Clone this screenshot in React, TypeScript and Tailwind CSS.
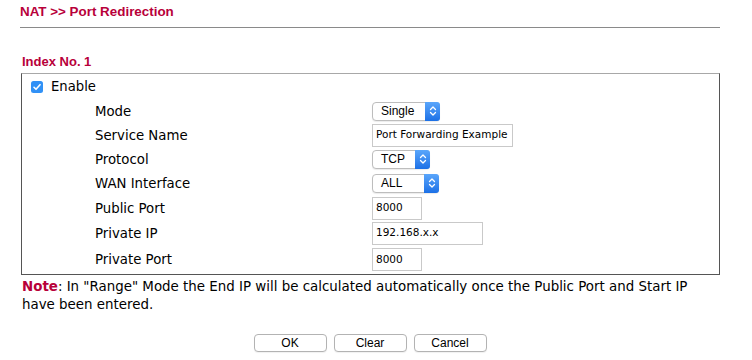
import React from "react";

const RED = "text-[#b8003a]";

function Select({ value, width }: { value: string; width: number }) {
  return (
    <div
      className="flex h-[19px] items-stretch rounded-[4px] border border-[#bdbdbd] bg-white shadow-[0_1px_1px_rgba(0,0,0,0.08)]"
      style={{ width }}
    >
      <div className="flex flex-1 items-center pl-[8px] text-[12px] text-black [font-family:'Liberation_Sans',Arial,sans-serif]">
        {value}
      </div>
      <div className="flex w-[15px] items-center justify-center rounded-r-[3px] bg-gradient-to-b from-[#5aa6fb] to-[#1b70e6] -my-px -mr-px">
        <svg width="8" height="12" viewBox="0 0 8 12" fill="none">
          <path d="M1.5 4.5 L4 2 L6.5 4.5" stroke="white" strokeWidth="1.3" strokeLinecap="round" strokeLinejoin="round" />
          <path d="M1.5 7.5 L4 10 L6.5 7.5" stroke="white" strokeWidth="1.3" strokeLinecap="round" strokeLinejoin="round" />
        </svg>
      </div>
    </div>
  );
}

function TextInput({ value, width }: { value: string; width: number }) {
  return (
    <div
      className="flex h-[23px] items-center border border-[#c9c9c9] bg-white pl-[3px] text-[10.5px] text-black [font-family:'DejaVu_Sans',sans-serif]"
      style={{ width }}
    >
      {value}
    </div>
  );
}

const rows: { label: string; h: number; control: React.ReactNode }[] = [
  { label: "Mode", h: 24, control: <Select value="Single" width={68} /> },
  { label: "Service Name", h: 24, control: <TextInput value="Port Forwarding Example" width={141} /> },
  { label: "Protocol", h: 24, control: <Select value="TCP" width={58} /> },
  { label: "WAN Interface", h: 24, control: <Select value="ALL" width={67} /> },
  { label: "Public Port", h: 26, control: <TextInput value="8000" width={50} /> },
  { label: "Private IP", h: 24, control: <TextInput value="192.168.x.x" width={111} /> },
  { label: "Private Port", h: 29, control: <TextInput value="8000" width={50} /> },
];

export default function App() {
  return (
    <div className="h-[360px] w-[752px] overflow-hidden bg-white text-black [font-family:'DejaVu_Sans',sans-serif]">
      <div className="w-[720px] pl-[20px]">
        <div className={`pt-[4px] text-[13.4px] font-bold leading-[16px] ${RED} [font-family:'Liberation_Sans',Arial,sans-serif]`}>
          NAT &gt;&gt; Port Redirection
        </div>
        <div className="mt-[7px] h-px bg-[#8a8a8a]" />
        <div className={`mt-[26px] pl-[2px] text-[13px] font-bold leading-[16px] ${RED} [font-family:'Liberation_Sans',Arial,sans-serif]`}>
          Index No. 1
        </div>
        <div className="ml-px mt-[3px] w-[699px] border border-[#555] border-t-[#a8a8a8]">
          <div className="flex h-[25px] items-center gap-[8px] pl-[9px] text-[13.2px]">
            <svg width="12" height="12" viewBox="0 0 12 12">
              <rect x="0" y="0" width="12" height="12" rx="2.5" fill="#3191f6" />
              <path d="M3 6.3 L5 8.3 L9 3.7" stroke="white" strokeWidth="1.6" fill="none" strokeLinecap="round" strokeLinejoin="round" />
            </svg>
            <span>Enable</span>
          </div>
          {rows.map((r) => (
            <div key={r.label} className="flex items-center pl-[73px] text-[13.3px]" style={{ height: r.h }}>
              <div className="w-[277px] pt-px">{r.label}</div>
              {r.control}
            </div>
          ))}
        </div>
        <div className="mt-[3px] w-[690px] pl-[2px] text-[13.4px] leading-[18px]">
          <span className={`font-bold ${RED}`}>Note</span>: In "Range" Mode the End IP will be calculated automatically once the Public Port and Start IP have been entered.
        </div>
        <div className="mt-[20px] flex justify-center gap-[7px] [font-family:'Liberation_Sans',Arial,sans-serif]">
          {["OK", "Clear", "Cancel"].map((b) => (
            <div
              key={b}
              className="flex h-[18px] w-[73px] items-center justify-center rounded-[4px] border border-[#b3b3b3] bg-white text-[12px] shadow-[0_1px_1px_rgba(0,0,0,0.06)]"
            >
              {b}
            </div>
          ))}
        </div>
      </div>
    </div>
  );
}
